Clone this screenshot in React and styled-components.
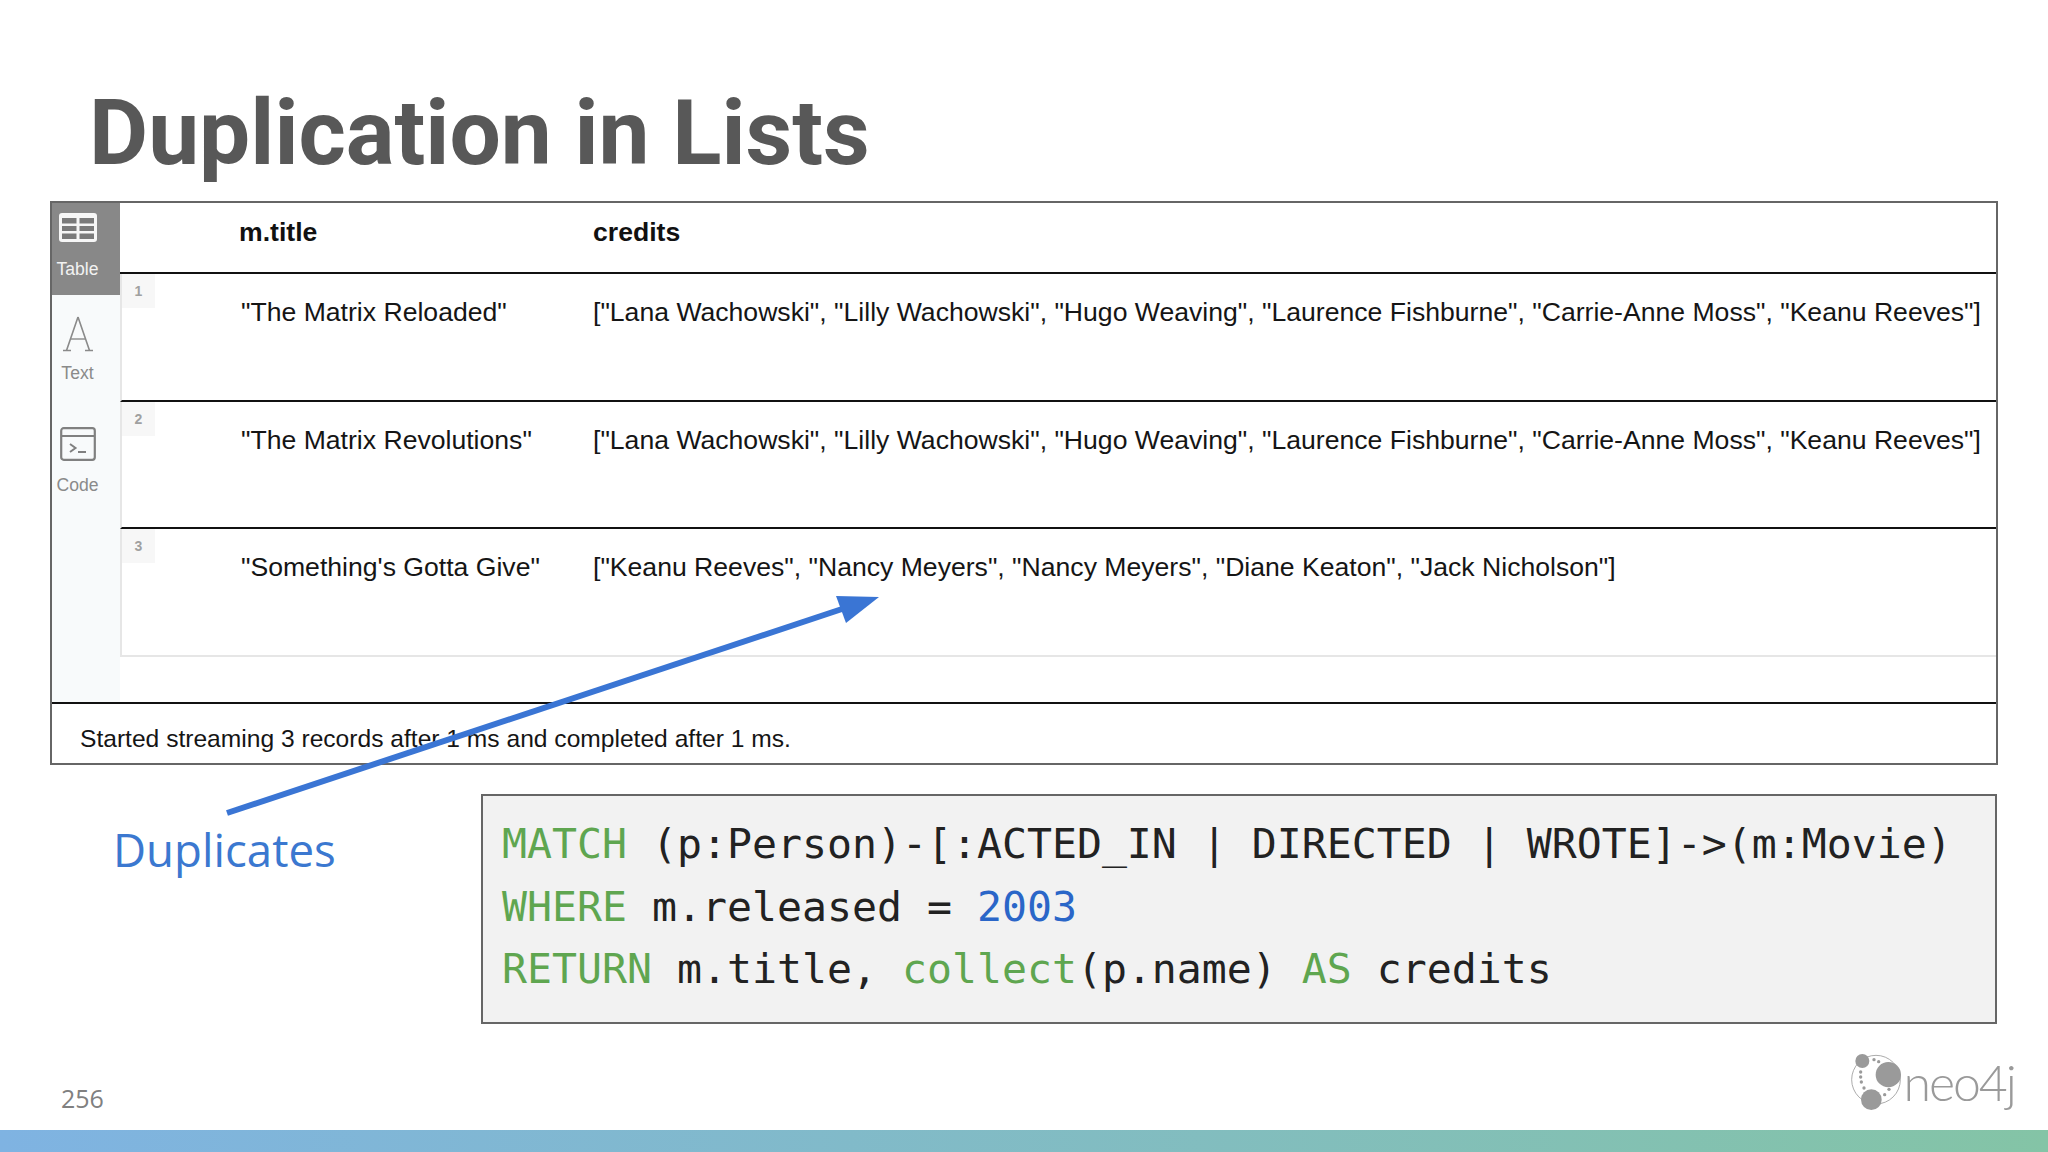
import React from "react";
import styled, { createGlobalStyle } from "styled-components";

const GlobalStyle = createGlobalStyle`
  html, body {
    margin: 0;
    padding: 0;
    background: #fff;
  }
`;

const Slide = styled.div`
  position: relative;
  width: 2048px;
  height: 1152px;
  overflow: hidden;
  display: flex;
  flex-direction: column;
  background: #fff;
  font-family: "Liberation Sans", Arial, sans-serif;
`;

const Title = styled.h1`
  margin: 0;
  height: 201px;
  padding: 80px 0 0 89px;
  box-sizing: border-box;
  font-family: Roboto, sans-serif;
  font-size: 91px;
  line-height: 106px;
  font-weight: 700;
  color: #585858;
`;

const Panel = styled.div`
  width: 1948px;
  height: 564px;
  flex: none;
  margin-left: 50px;
  box-sizing: border-box;
  border: 2px solid #666;
  display: flex;
  flex-direction: column;
`;

const PanelBody = styled.div`
  display: flex;
  height: 499px;
  flex: none;
  border-bottom: 2px solid #111;
`;

const Sidebar = styled.div`
  width: 68px;
  flex: none;
  background: #f8fafb;
  display: flex;
  flex-direction: column;
`;

const Tab = styled.div`
  height: ${(p) => p.$height}px;
  flex: none;
  box-sizing: border-box;
  padding: ${(p) => p.$top}px 17px 0 0;
  background: ${(p) => (p.$active ? "#888" : "transparent")};
  color: ${(p) => (p.$active ? "#f2f2f2" : "#8a8a8a")};
  display: flex;
  flex-direction: column;
  align-items: center;
  font-size: 17.6px;
  line-height: 20px;
  svg {
    display: block;
    flex: none;
    margin-bottom: ${(p) => p.$gap}px;
  }
`;

const TableArea = styled.div`
  flex: 1;
  min-width: 0;
  display: flex;
  flex-direction: column;
`;

const HeaderRow = styled.div`
  height: 71px;
  flex: none;
  box-sizing: border-box;
  border-bottom: 2px solid #111;
  display: grid;
  grid-template-columns: 119px 354px 1fr;
  align-items: center;
  font-size: 26.6px;
  font-weight: 700;
  color: #111;
  padding-bottom: 11px;
`;

const Row = styled.div`
  height: 127.5px;
  flex: none;
  box-sizing: border-box;
  display: grid;
  grid-template-columns: 119px 352px 1fr;
  border-left: 2px solid #e6e6e6;
  border-bottom: 2px solid ${(p) => (p.$last ? "#e6e6e6" : "#111")};
  font-size: 26.6px;
  line-height: 32px;
  color: #151515;
`;

const RowBadge = styled.div`
  width: 33px;
  height: 34px;
  background: #f7f7f7;
  color: #a0a0a0;
  font-size: 14px;
  font-weight: 700;
  display: flex;
  align-items: center;
  justify-content: center;
`;

const Cell = styled.div`
  padding-top: 22px;
  white-space: nowrap;
`;

const StatusBar = styled.div`
  flex: 1;
  display: flex;
  align-items: center;
  padding: 11px 0 0 28px;
  font-size: 24.6px;
  color: #151515;
`;

const CodeRow = styled.div`
  display: flex;
  margin-top: 29px;
`;

const Callout = styled.div`
  width: 481px;
  flex: none;
  box-sizing: border-box;
  padding: 24px 0 0 113px;
  font-family: "Open Sans", sans-serif;
  font-size: 45.6px;
  line-height: 62px;
  color: #3b78d0;
`;

const CodeBox = styled.pre`
  margin: 0;
  width: 1516px;
  height: 230px;
  box-sizing: border-box;
  border: 2px solid #666;
  background: #f2f2f2;
  padding: 17px 0 0 19px;
  font-family: "DejaVu Sans Mono", monospace;
  font-size: 41.52px;
  line-height: 62.6px;
  color: #222;
`;

const Keyword = styled.span`
  color: #5fa650;
`;

const NumberLit = styled.span`
  color: #2a66c8;
`;

const Footer = styled.div`
  flex: 1;
  display: flex;
  justify-content: space-between;
  align-items: flex-start;
`;

const PageNumber = styled.div`
  margin: 58px 0 0 61px;
  font-family: "Open Sans", sans-serif;
  font-size: 25px;
  line-height: 32px;
  color: #808080;
`;

const Logo = styled.div`
  display: flex;
  align-items: flex-start;
  margin: 28px 33px 0 0;
`;

const LogoWord = styled.span`
  font-family: Lato, sans-serif;
  font-weight: 300;
  font-size: 50px;
  line-height: 60px;
  letter-spacing: -2px;
  color: #9a9a9a;
  margin-left: -1px;
`;

const GradientBar = styled.div`
  height: 22px;
  flex: none;
  background: linear-gradient(90deg, #7fb3e2 0%, #84c4a6 100%);
`;

const ArrowOverlay = styled.svg`
  position: absolute;
  left: 0;
  top: 0;
  pointer-events: none;
`;

const TableIcon = () => (
  <svg width="38" height="29" viewBox="0 0 38 29">
    <rect width="38" height="29" rx="3" fill="#f6f6f6" />
    <path
      d="M3 5H17.5V10.5H3ZM20.5 5H35V10.5H20.5ZM3 13H17.5V18H3ZM20.5 13H35V18H20.5ZM3 20.5H17.5V26H3ZM20.5 20.5H35V26H20.5Z"
      fill="#7a7a7a"
    />
  </svg>
);

const LetterIcon = () => (
  <svg width="32" height="36" viewBox="0 0 32 36" fill="none" stroke="#8a8a8a">
    <path d="M16 1L4.5 34.5M16 1L27.5 34.5" strokeWidth="1.6" />
    <path d="M8 23H24" strokeWidth="1.4" />
    <path d="M1 34.5H9M23 34.5H31" strokeWidth="1.4" />
  </svg>
);

const CodeIcon = () => (
  <svg width="36" height="34" viewBox="0 0 36 34" fill="none" stroke="#808080">
    <rect x="1.2" y="1.2" width="33.6" height="31.6" rx="2.5" strokeWidth="2.2" />
    <path d="M1 9H35" strokeWidth="2" />
    <path d="M10 17L15.5 21L10 25" strokeWidth="2" />
    <path d="M18 25H26" strokeWidth="2" />
  </svg>
);

const NeoMark = () => (
  <svg width="54" height="60" viewBox="150 95 162 180">
    <circle cx="228" cy="178" r="73" fill="none" stroke="#9a9a9a" strokeWidth="2.5" />
    <circle cx="187" cy="122" r="21" fill="#9a9a9a" />
    <circle cx="265" cy="163" r="38" fill="#9a9a9a" />
    <circle cx="214" cy="238" r="31" fill="#9a9a9a" />
    {[[222, 118], [236, 124], [182, 155], [182, 170], [184, 185], [192, 203], [267, 207], [254, 223]].map(([x, y]) => (
      <circle key={`${x}-${y}`} cx={x} cy={y} r="5" fill="#9a9a9a" />
    ))}
  </svg>
);

const matrixCredits =
  '["Lana Wachowski", "Lilly Wachowski", "Hugo Weaving", "Laurence Fishburne", "Carrie-Anne Moss", "Keanu Reeves"]';

const rows = [
  { title: '"The Matrix Reloaded"', credits: matrixCredits },
  { title: '"The Matrix Revolutions"', credits: matrixCredits },
  {
    title: '"Something\'s Gotta Give"',
    credits: '["Keanu Reeves", "Nancy Meyers", "Nancy Meyers", "Diane Keaton", "Jack Nicholson"]',
  },
];

export default function App() {
  return (
    <Slide>
      <GlobalStyle />
      <Title>Duplication in Lists</Title>
      <Panel>
        <PanelBody>
          <Sidebar>
            <Tab $active $height={92} $top={10} $gap={17}>
              <TableIcon />
              Table
            </Tab>
            <Tab $height={105} $top={21} $gap={11}>
              <LetterIcon />
              Text
            </Tab>
            <Tab $height={100} $top={27} $gap={14}>
              <CodeIcon />
              Code
            </Tab>
          </Sidebar>
          <TableArea>
            <HeaderRow>
              <span />
              <span>m.title</span>
              <span>credits</span>
            </HeaderRow>
            {rows.map((row, i) => (
              <Row key={i} $last={i === rows.length - 1}>
                <div>
                  <RowBadge>{i + 1}</RowBadge>
                </div>
                <Cell>{row.title}</Cell>
                <Cell>{row.credits}</Cell>
              </Row>
            ))}
          </TableArea>
        </PanelBody>
        <StatusBar>Started streaming 3 records after 1 ms and completed after 1 ms.</StatusBar>
      </Panel>
      <CodeRow>
        <Callout>Duplicates</Callout>
        <CodeBox>
          <Keyword>MATCH</Keyword> (p:Person)-[:ACTED_IN | DIRECTED | WROTE]-&gt;(m:Movie){"\n"}
          <Keyword>WHERE</Keyword> m.released = <NumberLit>2003</NumberLit>{"\n"}
          <Keyword>RETURN</Keyword> m.title, <Keyword>collect</Keyword>(p.name) <Keyword>AS</Keyword> credits
        </CodeBox>
      </CodeRow>
      <Footer>
        <PageNumber>256</PageNumber>
        <Logo>
          <NeoMark />
          <LogoWord>neo4j</LogoWord>
        </Logo>
      </Footer>
      <GradientBar />
      <ArrowOverlay width="2048" height="1152" viewBox="0 0 2048 1152">
        <path d="M227 813L842 609" stroke="#3a75d4" strokeWidth="6" fill="none" />
        <path d="M879 597L836 596L846 623Z" fill="#3a75d4" />
      </ArrowOverlay>
    </Slide>
  );
}
